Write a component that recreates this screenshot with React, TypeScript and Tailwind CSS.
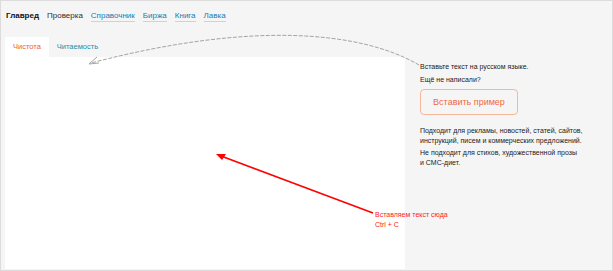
import React from 'react';

const navItems = [
  { label: 'Главред', cls: 'font-bold text-[#111]' },
  { label: 'Проверка', cls: 'text-[#3a2a1a]' },
  { label: 'Справочник', cls: 'text-[#1a7bb0] border-b border-[#bcd9ea]' },
  { label: 'Биржа', cls: 'text-[#1a7bb0] border-b border-[#bcd9ea]' },
  { label: 'Книга', cls: 'text-[#1a7bb0] border-b border-[#bcd9ea]' },
  { label: 'Лавка', cls: 'text-[#1a7bb0] border-b border-[#bcd9ea]' },
];

const App: React.FC = () => {
  return (
    <div className="relative w-[613px] h-[271px] bg-[#f5f5f5] border border-[#dcdcdc] overflow-hidden font-['Liberation_Sans',Arial,sans-serif]">
      {/* top nav */}
      <nav className="flex items-center gap-[8px] pl-[5px] pt-[8px] h-[22px] text-[8px] leading-[10px]">
        {navItems.map((n) => (
          <span key={n.label} className={n.cls}>
            {n.label}
          </span>
        ))}
      </nav>

      <div className="flex mt-[14px]">
        {/* editor column */}
        <div className="flex flex-col ml-[4px] w-[400px]">
          <div className="flex text-[7.5px] h-[20px] items-center">
            <div className="bg-white h-full px-[8px] flex items-center text-[#f05a3c]">Чистота</div>
            <div className="px-[8px] text-[#1a8fa8]">Читаемость</div>
          </div>
          <div className="bg-white h-[212px]" />
        </div>

        {/* side panel */}
        <div className="flex flex-col pl-[15px] pt-[25px] text-[7px] leading-[10px] text-[#222]">
          <p>Вставьте текст на русском языке.</p>
          <p className="mt-[3px]">Ещё не написали?</p>
          <button className="mt-[4px] w-[98px] h-[26px] rounded-[4px] border border-[#f7b79a] text-[#f26a3b] text-[9px] bg-transparent">
            Вставить пример
          </button>
          <p className="mt-[11px]">
            Подходит для рекламы, новостей, статей, сайтов,
            <br />
            инструкций, писем и коммерческих предложений.
          </p>
          <p className="mt-[2px]">
            Не подходит для стихов, художественной прозы
            <br />и СМС-диет.
          </p>
        </div>
      </div>

      {/* annotations */}
      <svg className="absolute left-0 top-0 pointer-events-none" width="613" height="271">
        <path
          d="M418 64 C 360 30, 250 20, 90 62"
          fill="none"
          stroke="#9a9a9a"
          strokeWidth="0.9"
          strokeDasharray="4 1.5"
        />
        <path d="M96 56 L88 63 L98 62" fill="none" stroke="#9a9a9a" strokeWidth="0.9" />
        <line x1="372" y1="212" x2="220" y2="155" stroke="#ff0000" strokeWidth="1.6" />
        <path d="M215 153 L225 153 L221 159 Z" fill="#ff0000" />
      </svg>
      <div className="absolute left-[374px] top-[209px] text-[7px] leading-[10px] text-[#ff2020]">
        <p>Вставляем текст сюда</p>
        <p>Ctrl + C</p>
      </div>
    </div>
  );
};

export default App;
